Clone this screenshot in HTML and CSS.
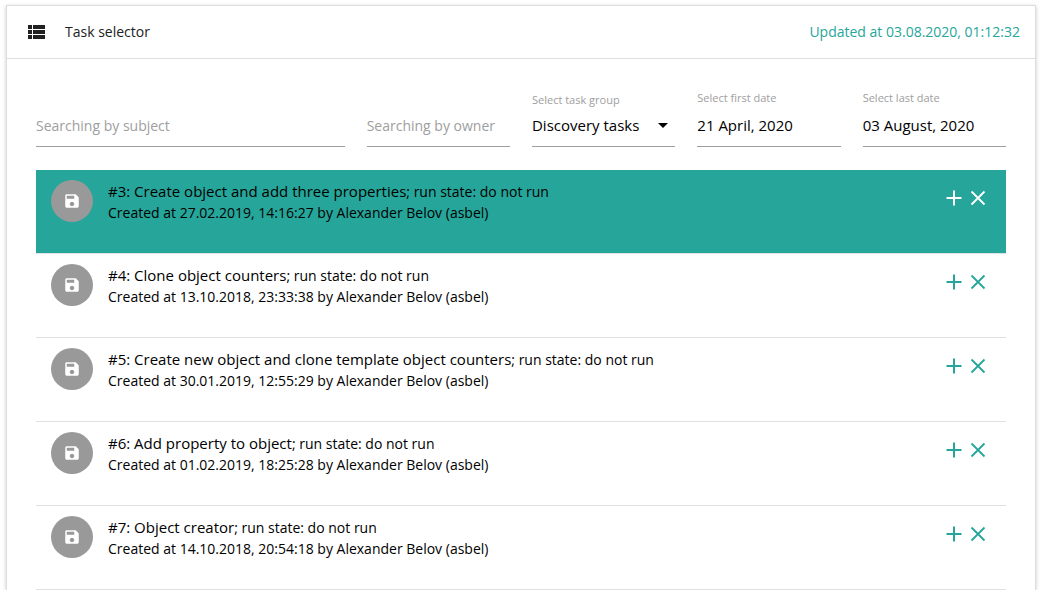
FILE: index.html
```html
<!DOCTYPE html>
<html lang="en">
<head>
<meta charset="utf-8">
<meta name="viewport" content="width=device-width, initial-scale=1">
<title>Task selector</title>
<link rel="stylesheet" href="styles.css">
</head>
<body>
<svg class="sprite" aria-hidden="true">
  <symbol id="save" viewBox="0 0 24 24"><path d="M17 3H5c-1.11 0-2 .9-2 2v14c0 1.1.89 2 2 2h14c1.1 0 2-.9 2-2V7l-4-4zm-5 16c-1.66 0-3-1.34-3-3s1.34-3 3-3 3 1.34 3 3-1.34 3-3 3zm3-10H5V5h10v4z"/></symbol>
  <symbol id="add" viewBox="0 0 24 24"><path d="M19.500 13H13v6.500h-2V13H4.500v-2H11V4.500h2V11h6.500z"/></symbol>
  <symbol id="close" viewBox="0 0 24 24"><path d="M5.500 5.500l13 13M18.500 5.500l-13 13" fill="none" stroke="currentColor" stroke-width="1.800"/></symbol>
</svg>
<main class="card">
  <header class="card-header">
    <svg class="icon" viewBox="0 0 24 24" aria-hidden="true"><path d="M4 14h4v-4H4v4zm0 5h4v-4H4v4zM4 9h4V5H4v4zm5 5h12v-4H9v4zm0 5h12v-4H9v4zM9 5v4h12V5H9z"/></svg>
    <h1 class="card-title">Task selector</h1>
    <span class="updated">Updated at 03.08.2020, 01:12:32</span>
  </header>
  <form class="filters">
    <div class="field"><input class="control" type="text" placeholder="Searching by subject" aria-label="Searching by subject"></div>
    <div class="field"><input class="control" type="text" placeholder="Searching by owner" aria-label="Searching by owner"></div>
    <div class="field field-select">
      <label class="label" for="group">Select task group</label>
      <select class="control select" id="group"><option>Discovery tasks</option></select>
      <svg class="caret" viewBox="0 0 10 5" aria-hidden="true"><path d="M0 0h10L5 5z"/></svg>
    </div>
    <div class="field">
      <label class="label" for="first">Select first date</label>
      <input class="control" id="first" type="text" value="21 April, 2020">
    </div>
    <div class="field">
      <label class="label" for="last">Select last date</label>
      <input class="control" id="last" type="text" value="03 August, 2020">
    </div>
  </form>
  <ul class="tasks">
    <li class="task task-active">
      <span class="avatar"><svg class="avatar-icon"><use href="#save"/></svg></span>
      <div class="task-text">
        <p class="task-line"><span class="subject">#3: Create object and add three properties</span>; run state: do not run</p>
        <p class="task-line">Created at 27.02.2019, 14:16:27 by Alexander Belov (asbel)</p>
      </div>
      <div class="actions">
        <button class="action" type="button" aria-label="Add"><svg class="icon"><use href="#add"/></svg></button>
        <button class="action" type="button" aria-label="Remove"><svg class="icon"><use href="#close"/></svg></button>
      </div>
    </li>
    <li class="task">
      <span class="avatar"><svg class="avatar-icon"><use href="#save"/></svg></span>
      <div class="task-text">
        <p class="task-line"><span class="subject">#4: Clone object counters</span>; run state: do not run</p>
        <p class="task-line">Created at 13.10.2018, 23:33:38 by Alexander Belov (asbel)</p>
      </div>
      <div class="actions">
        <button class="action" type="button" aria-label="Add"><svg class="icon"><use href="#add"/></svg></button>
        <button class="action" type="button" aria-label="Remove"><svg class="icon"><use href="#close"/></svg></button>
      </div>
    </li>
    <li class="task">
      <span class="avatar"><svg class="avatar-icon"><use href="#save"/></svg></span>
      <div class="task-text">
        <p class="task-line"><span class="subject">#5: Create new object and clone template object counters</span>; run state: do not run</p>
        <p class="task-line">Created at 30.01.2019, 12:55:29 by Alexander Belov (asbel)</p>
      </div>
      <div class="actions">
        <button class="action" type="button" aria-label="Add"><svg class="icon"><use href="#add"/></svg></button>
        <button class="action" type="button" aria-label="Remove"><svg class="icon"><use href="#close"/></svg></button>
      </div>
    </li>
    <li class="task">
      <span class="avatar"><svg class="avatar-icon"><use href="#save"/></svg></span>
      <div class="task-text">
        <p class="task-line"><span class="subject">#6: Add property to object</span>; run state: do not run</p>
        <p class="task-line">Created at 01.02.2019, 18:25:28 by Alexander Belov (asbel)</p>
      </div>
      <div class="actions">
        <button class="action" type="button" aria-label="Add"><svg class="icon"><use href="#add"/></svg></button>
        <button class="action" type="button" aria-label="Remove"><svg class="icon"><use href="#close"/></svg></button>
      </div>
    </li>
    <li class="task">
      <span class="avatar"><svg class="avatar-icon"><use href="#save"/></svg></span>
      <div class="task-text">
        <p class="task-line"><span class="subject">#7: Object creator</span>; run state: do not run</p>
        <p class="task-line">Created at 14.10.2018, 20:54:18 by Alexander Belov (asbel)</p>
      </div>
      <div class="actions">
        <button class="action" type="button" aria-label="Add"><svg class="icon"><use href="#add"/></svg></button>
        <button class="action" type="button" aria-label="Remove"><svg class="icon"><use href="#close"/></svg></button>
      </div>
    </li>
  </ul>
</main>
</body>
</html>
```
FILE: styles.css
```css
* {
  box-sizing: border-box;
}

body {
  margin: 0;
  padding: 5px 8px 0 6px;
  background: #fff;
  color: #000;
  font-family: "Segoe UI", "Open Sans", "Noto Sans", sans-serif;
  font-size: 14px;
  line-height: 21px;
}

.sprite {
  display: none;
}

.icon {
  display: block;
  width: 24px;
  height: 24px;
  fill: currentColor;
}

.card {
  border: 1px solid #ddd;
  border-bottom: 0;
  box-shadow: 0 1px 4px rgba(0, 0, 0, 0.2);
}

.card-header {
  display: flex;
  align-items: center;
  height: 53px;
  padding: 0 15px 1px 17px;
  border-bottom: 1px solid #ddd;
  color: #212121;
}

.card-title {
  margin: 0 0 0 17px;
  font-size: 14px;
  font-weight: 400;
}

.updated {
  margin-left: auto;
  color: #26a69a;
}

.filters {
  display: grid;
  grid-template-columns: 2fr repeat(4, 1fr);
  padding: 31px 18px 23px;
}

.field {
  display: flex;
  flex-direction: column;
  justify-content: flex-end;
  min-width: 0;
  padding: 0 11px;
}

.field-select {
  position: relative;
}

.label {
  color: #9e9e9e;
  font-size: 11px;
  line-height: 16px;
}

.control {
  width: 100%;
  height: 41px;
  padding: 0 0 2px;
  border: 0;
  border-bottom: 1px solid #9e9e9e;
  border-radius: 0;
  outline: 0;
  background: transparent;
  color: #000;
  font: inherit;
  font-size: 15px;
}

.control::placeholder {
  color: #9e9e9e;
  font-size: 14px;
  opacity: 1;
}

.select {
  appearance: none;
  height: 39px;
  padding-bottom: 4px;
}

.caret {
  position: absolute;
  right: 18px;
  bottom: 19px;
  width: 10px;
  height: 5px;
  pointer-events: none;
}

.tasks {
  margin: 0;
  padding: 0 29px;
  list-style: none;
}

.task {
  display: flex;
  align-items: flex-start;
  min-height: 84px;
  padding: 10px 16px 10px 15px;
  border-bottom: 1px solid #e0e0e0;
}

.task-active {
  background: #26a69a;
  background-clip: padding-box;
}

.avatar {
  display: flex;
  flex: none;
  align-items: center;
  justify-content: center;
  width: 42px;
  height: 42px;
  border-radius: 50%;
  background: #999;
  color: #fff;
}

.avatar-icon {
  width: 18px;
  height: 18px;
  fill: currentColor;
}

.task-text {
  flex: 1;
  min-width: 0;
  padding: 1px 15px 0;
}

.task-line {
  margin: 0;
}

.subject {
  font-size: 15px;
}

.actions {
  display: flex;
  padding-top: 6px;
}

.action {
  padding: 0;
  border: 0;
  background: none;
  color: #26a69a;
  cursor: pointer;
}

.task-active .action {
  color: #fff;
}
```
